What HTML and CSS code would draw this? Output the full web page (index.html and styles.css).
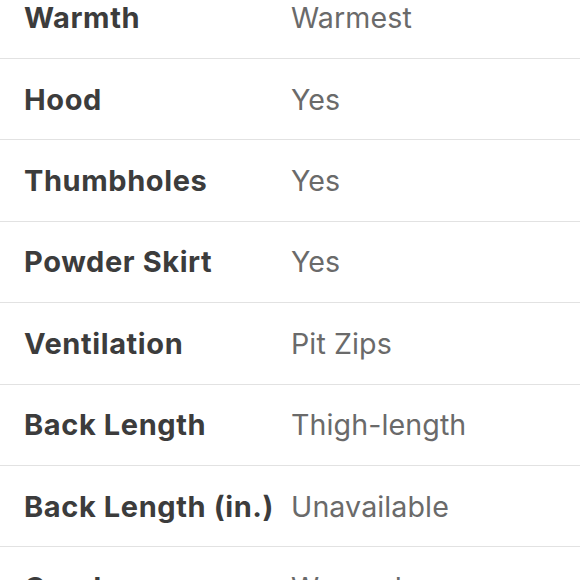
FILE: index.html
```html
<!DOCTYPE html>
<html lang="en">
<head>
<meta charset="utf-8">
<link rel="stylesheet" href="styles.css">
<title>Specs</title>
</head>
<body>
<div class="specs">
  <div class="row"><div class="label">Warmth</div><div class="value">Warmest</div></div>
  <div class="row"><div class="label">Hood</div><div class="value">Yes</div></div>
  <div class="row"><div class="label">Thumbholes</div><div class="value">Yes</div></div>
  <div class="row"><div class="label">Powder Skirt</div><div class="value">Yes</div></div>
  <div class="row"><div class="label">Ventilation</div><div class="value">Pit Zips</div></div>
  <div class="row"><div class="label">Back Length</div><div class="value">Thigh-length</div></div>
  <div class="row"><div class="label">Back Length (in.)</div><div class="value">Unavailable</div></div>
  <div class="row"><div class="label">Gender</div><div class="value">Women's</div></div>
</div>
</body>
</html>
```

FILE: styles.css
```css
html, body {
  margin: 0;
  padding: 0;
  background: #ffffff;
  overflow: hidden;
}
.specs {
  margin-top: -22.4px;
  font-family: Inter, "Noto Sans", sans-serif;
}
.row {
  display: grid;
  grid-template-columns: 267px 1fr;
  align-items: center;
  box-sizing: border-box;
  height: 81.4px;
  padding-left: 24px;
  border-bottom: 1.5px solid #e2e2e2;
}
.label {
  font-size: 29px;
  letter-spacing: 0.6px;
  font-weight: 700;
  color: #3c3c3c;
}
.value {
  font-size: 28.6px;
  letter-spacing: 0.1px;
  font-weight: 400;
  color: #6a6a6a;
}
```
